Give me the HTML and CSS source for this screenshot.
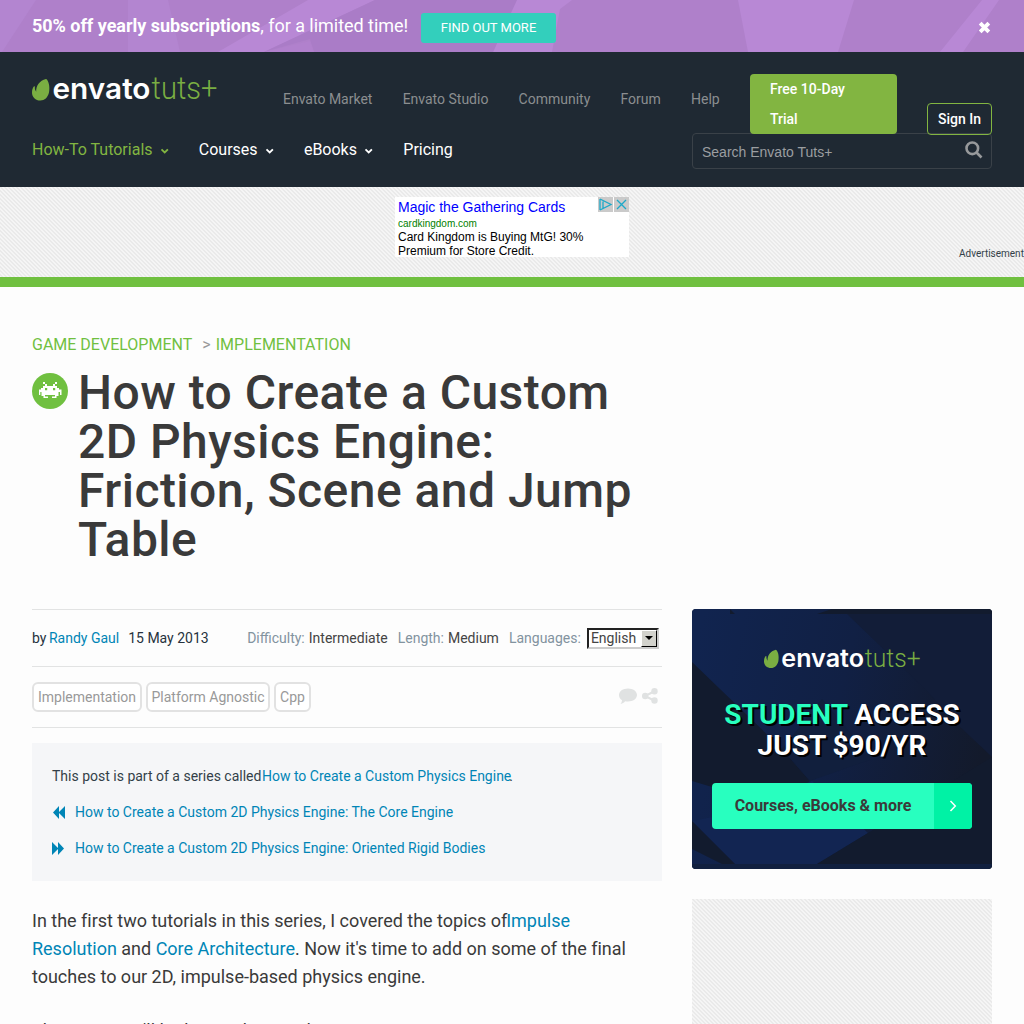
FILE: index.html
```html
<!DOCTYPE html>
<html lang="en">
<head>
<meta charset="utf-8">
<title>How to Create a Custom 2D Physics Engine: Friction, Scene and Jump Table</title>
<link rel="stylesheet" href="styles.css">
</head>
<body>
<div class="promo">
  <svg class="facets" viewBox="0 0 1024 52" preserveAspectRatio="none">
    <path fill="#b385d0" d="M0 0H36L2 52H0ZM128 0H168L180 52H128Z"/>
    <path fill="#b888d5" d="M308 0H375L264 52H218ZM516 0H572L560 9 552 52H493ZM738 0H854L838 52H748ZM982 0H999L963 52H940Z"/>
    <path fill="#aa7cc7" d="M375 0H517L493 52H314L310 39 264 52Z"/>
    <path fill="#b181cd" d="M310 41 264 52H314Z"/>
  </svg>
  <p class="promo-text"><b>50% off yearly subscriptions</b>, for a limited time!</p>
  <a class="promo-btn">FIND OUT MORE</a>
  <svg class="close" viewBox="0 0 12 12"><path d="M2 2 10 10M10 2 2 10" stroke="#fff" stroke-width="3.600"/></svg>
</div>

<header class="header">
  <div class="top">
    <svg class="logo" viewBox="0 0 186 26">
      <path class="leaf" d="M14 1C16.500 2 18.200 8.500 17 14.500 15.800 19.500 12.600 22.500 8.400 22.500 3.500 22.500 0 19 0 14.700 0 12 .6 10 1.800 8.500 2.400 8 3 8.300 2.900 9 2.700 11 3.100 12 4.200 13.800 3.900 8 7.500 2.500 14 1Z"/>
      <text class="word" x="20.500" y="21.300" textLength="98" lengthAdjust="spacingAndGlyphs">envato</text>
      <text class="thin" x="119.500" y="21.300" textLength="66" lengthAdjust="spacingAndGlyphs">tuts+</text>
    </svg>
    <nav class="links"><a>Envato Market</a><a>Envato Studio</a><a>Community</a><a>Forum</a><a>Help</a></nav>
    <a class="trial">Free 10-Day<br>Trial</a>
    <a class="signin">Sign In</a>
  </div>
  <div class="bottom">
    <nav class="menu">
      <a class="active">How-To Tutorials<svg viewBox="0 0 10 7"><path d="M1.500 1.300 4.700 4.500 7.900 1.300"/></svg></a>
      <a>Courses<svg viewBox="0 0 10 7"><path d="M1.500 1.300 4.700 4.500 7.900 1.300"/></svg></a>
      <a>eBooks<svg viewBox="0 0 10 7"><path d="M1.500 1.300 4.700 4.500 7.900 1.300"/></svg></a>
      <a>Pricing</a>
    </nav>
    <div class="search"><span>Search Envato Tuts+</span>
      <svg viewBox="0 0 18 18"><circle cx="7.300" cy="7.300" r="5.800"/><path d="M11.500 11.500 16.500 16.500"/></svg>
    </div>
  </div>
</header>

<div class="banner">
  <div class="ad">
    <p class="ad-title">Magic the Gathering Cards</p>
    <p class="ad-url">cardkingdom.com</p>
    <p class="ad-body">Card Kingdom is Buying MtG! 30%<br>Premium for Store Credit.</p>
    <div class="ad-marks">
      <svg viewBox="0 0 15 15"><path d="M2 2V13M2 2 13 7.500 5 11.500V4.500M2 13 5 11.500"/></svg>
      <svg viewBox="0 0 15 15"><path d="M3 3 12 12M12 3 3 12"/></svg>
    </div>
  </div>
  <span class="ad-label">Advertisement</span>
</div>

<main class="page">
  <div class="crumbs"><a>GAME DEVELOPMENT</a><i>&gt;</i><a>IMPLEMENTATION</a></div>
  <div class="heading">
    <svg class="badge" viewBox="0 0 36 36"><circle cx="18" cy="18" r="18" fill="#70c040"/>
      <path fill="#fff" d="M11 9h2v2h2v2h6v-2h2V9h2v2h-2v2h2v2h2v1.500h2.500V22H28v-3H26.500v4H24.500v2h-4.500v-1.500h3V22H13v1.500h3V25h-4.500v-2H9.500v-4H8.300v3H7v-5.500h2V15h2v-2h2v-2h-2Z"/>
      <path fill="#70c040" d="M13 15h2.200v2.200H13zM21 15h2.200v2.200H21z"/></svg>
    <h1>How to Create a Custom<br>2D Physics Engine:<br>Friction, Scene and Jump<br>Table</h1>
  </div>
  <div class="columns">
    <article>
      <div class="meta">
        <span class="by">by</span><a class="author">Randy Gaul</a><span class="date">15 May 2013</span>
        <span class="pair"><em>Difficulty:</em>Intermediate</span>
        <span class="pair"><em>Length:</em>Medium</span>
        <span class="pair"><em>Languages:</em></span>
        <div class="select"><span>English</span><b><svg viewBox="0 0 8 4"><path d="M0 0H8L4 4Z"/></svg></b></div>
      </div>
      <div class="tags"><a class="t1">Implementation</a><a class="t2">Platform Agnostic</a><a class="t3">Cpp</a>
        <svg class="bubble" viewBox="0 0 18 16"><path d="M9 .5C14 .5 18 3.300 18 7S14 13.500 9 13.500C8 13.500 7 13.400 6.200 13.200 5 14.500 3.500 15.500 1.500 16 2.500 14.800 3 13.500 3 12.200 1 11 0 9.300 0 7 0 3.300 4 .5 9 .5Z"/></svg>
        <svg class="share" viewBox="0 0 16 16"><path d="M13 3 3 8 13 13" fill="none" stroke="#e0e2e2" stroke-width="2"/><circle cx="12.500" cy="3.200" r="3.200"/><circle cx="3.200" cy="8" r="3.200"/><circle cx="12.500" cy="12.500" r="3.200"/></svg>
      </div>
      <div class="series">
        <p>This post is part of a series called<a>How to Create a Custom Physics Engine</a><span class="dot">.</span></p>
        <p><svg viewBox="0 0 13 13"><path d="M1 6.500 7 0V6L13 0V13L7 7V13Z"/></svg><a>How to Create a Custom 2D Physics Engine: The Core Engine</a></p>
        <p><svg viewBox="0 0 13 13"><path d="M12 6.500 6 0V6L0 0V13L6 7V13Z"/></svg><a>How to Create a Custom 2D Physics Engine: Oriented Rigid Bodies</a></p>
      </div>
      <div class="body">
        <p>In the first two tutorials in this series, I covered the topics of<a class="tight">Impulse</a><br><a>Resolution</a> and <a>Core Architecture</a>. Now it's time to add on some of the final<br>touches to our 2D, impulse-based physics engine.</p>
        <p>The topics we'll look at in this article are:</p>
      </div>
    </article>
    <aside>
      <div class="student">
        <svg class="facets" viewBox="0 0 300 260">
          <defs><linearGradient id="night" x1="0" y1=".2" x2="1" y2=".4"><stop offset="0" stop-color="#11244f"/><stop offset=".5" stop-color="#112044"/><stop offset="1" stop-color="#131a2b"/></linearGradient></defs>
          <path fill="url(#night)" d="M0 0H300V260H0Z"/>
          <path fill="#121b2e" d="M0 53 90 140 118 172 80 196 0 172ZM38 5H43L38 0ZM125 5 140 0H300V5Z"/>
          <path fill="#121d38" d="M155 5H300V148L265 115 235 82Z"/>
          <path fill="#111f3d" d="M90 140 118 172 180 150 130 90Z"/>
          <path fill="#122552" d="M0 212 43 255H125L176 224 120 172 80 196Z"/>
          <path fill="#121b2e" d="M0 212 43 255H30L0 240ZM125 255 176 224 300 148V255Z"/>
          <path fill="#11203f" d="M0 255H300V260H0Z"/>
        </svg>
        <svg class="logo" viewBox="0 0 186 26">
          <path class="leaf" d="M14 1C16.500 2 18.200 8.500 17 14.500 15.800 19.500 12.600 22.500 8.400 22.500 3.500 22.500 0 19 0 14.700 0 12 .6 10 1.800 8.500 2.400 8 3 8.300 2.900 9 2.700 11 3.100 12 4.200 13.800 3.900 8 7.500 2.500 14 1Z"/>
          <text class="word" x="20.500" y="21.300" textLength="98" lengthAdjust="spacingAndGlyphs">envato</text>
          <text class="thin" x="119.500" y="21.300" textLength="66" lengthAdjust="spacingAndGlyphs">tuts+</text>
        </svg>
        <p class="pitch"><b>STUDENT</b> ACCESS<br>JUST $90/YR</p>
        <a class="cta"><span>Courses, eBooks &amp; more</span><i><svg viewBox="0 0 8 12"><path d="M1.500 1 6.300 6 1.500 11"/></svg></i></a>
      </div>
      <div class="slot"></div>
    </aside>
  </div>
</main>
</body>
</html>
```

FILE: styles.css
```css
* { box-sizing: border-box; }
html, body { height: 1024px; overflow: hidden; }
body { margin: 0; background: #fdfdfd; font: 14px/20px Roboto, sans-serif; color: #3a3a3a; }
p, h1 { margin: 0; }
i, em { font-style: normal; }
a, span { white-space: nowrap; }
.facets { position: absolute; left: 0; top: 0; width: 100%; height: 100%; z-index: -1; }
.leaf { fill: #7aae42; }
.word { font: 600 29px Inter, sans-serif; fill: #fff; }
.thin { font: 300 31px Roboto, sans-serif; fill: #7aae42; }

.promo { position: relative; z-index: 0; height: 52px; background: #af80ca; color: #fff; display: flex; align-items: flex-start; padding: 13px 33px 0 32px; }
.promo-text { font-size: 18px; line-height: 26px; letter-spacing: -.03px; width: 389px; white-space: nowrap; }
.promo-btn { width: 135px; height: 30px; line-height: 30px; border-radius: 3px; background: #33cfbc; font-size: 13px; text-align: center; }
.close { width: 13px; height: 13px; margin: 8px 0 0 auto; }

.header { height: 135px; background: #1f2933; padding: 22px 32px 0; }
.top { height: 60px; display: flex; align-items: flex-start; }
.top .logo { width: 186px; height: 26px; margin-top: 4px; overflow: visible; }
.links { display: flex; gap: 30.200px; margin-left: 65px; padding-top: 15px; color: #8b8e90; width: 467px; }
.trial { position: relative; z-index: 1; width: 147px; height: 60px; padding-left: 20px; border-radius: 4px; background: #82b541; color: #fff; font-weight: 500; line-height: 30px; }
.signin { position: relative; width: 65px; height: 32px; margin: 29px 0 0 30px; border: 1px solid #82b541; border-radius: 4px; color: #fff; font-weight: 500; line-height: 30px; text-align: center; }
.bottom { display: flex; justify-content: space-between; margin-top: -1px; }
.menu { display: flex; gap: 29.300px; padding-top: 7px; font-size: 16px; color: #fff; }
.menu .active { color: #82b541; }
.menu svg { width: 10px; height: 7px; margin-left: 7px; fill: none; stroke: currentColor; stroke-width: 1.800; }
.search { width: 300px; height: 36px; border: 1px solid #3a4148; border-radius: 4px; display: flex; justify-content: space-between; padding: 8px 8px 0 9px; color: #9b9ea1; }
.search span { font: 14px/20px "Liberation Sans", sans-serif; }
.search svg { width: 18px; height: 18px; margin-top: -1px; fill: none; stroke: #97999b; stroke-width: 2.600; }

.banner { height: 100px; border-bottom: 10px solid #70c040; display: flex; justify-content: space-between; padding: 10px 0 0 395px; }
.banner, .slot { background: repeating-linear-gradient(45deg, #f5f5f5 0 1.414px, #eaeaea 1.414px 2.828px); }
.ad { position: relative; width: 234px; height: 60px; background: #fff; padding: 2px 3px; font: 12px/14px "Liberation Sans", sans-serif; color: #000; white-space: nowrap; }
.ad-title { font-size: 14px; line-height: 16px; color: #00f; }
.ad-url { font-size: 10px; line-height: 13px; margin-top: 2px; color: #008000; }
.ad-marks { position: absolute; right: 0; top: 0; display: flex; gap: 1px; }
.ad-marks svg { width: 15px; height: 15px; background: #cacaca; fill: none; stroke: #1ba9c9; stroke-width: 1.300; }
.ad-label { font-size: 10px; margin-top: 47px; color: #333f48; width: 65px; }

.page { padding: 48px 32px 0; }
.crumbs { display: flex; font-size: 16px; color: #70c040; line-height: 20px; }
.crumbs i { color: #999; font-size: 16px; width: 23.500px; padding-left: 10px; }
.heading { display: flex; margin-top: 13px; gap: 10px; height: 241px; }
.badge { width: 36px; height: 36px; margin-top: 5px; }
h1 { font-size: 48px; line-height: 49px; font-weight: 500; letter-spacing: .46px; white-space: nowrap; }
.columns { display: flex; gap: 30px; }
article { width: 630px; }
.meta { height: 58px; border: solid #e2e3e3; border-width: 1px 0; display: flex; align-items: center; color: #444; }
.by, .date { color: #26323d; }
.author { margin: 0 9px 0 2.500px; }
a.author, .series a, .body a { color: #0085b6; }
.date { width: 119px; }
.pair { margin-right: 10px; }
.pair em { color: #82939f; margin-right: 4px; }
.select { width: 72px; height: 21px; margin-left: -7.500px; border: 2px solid #000; border-color: #222 #ccc #ccc #222; background: #fff; display: flex; justify-content: space-between; line-height: 16px; padding-left: 1.500px; }
.select b { width: 16px; background: #d2d2cc; border: 1px solid; border-color: #fff #000 #000 #fff; display: grid; place-items: center; }
.select svg { width: 8px; height: 4px; }
.tags { height: 61px; border-bottom: 1px solid #e2e3e3; display: flex; gap: 4px; align-items: center; padding-right: 4px; }
.tags a { height: 30px; border: 2px solid #e2e2e2; border-radius: 6px; line-height: 26px; text-align: center; color: #999; background: #fff; }
.t1 { width: 110px; }
.t2 { width: 124px; }
.t3 { width: 37px; }
.tags svg { fill: #e0e2e2; height: 16px; margin-bottom: 2px; }
.tags .bubble { width: 18px; margin-left: auto; margin-right: 1px; }
.share { width: 16px; }
.series { margin-top: 15px; height: 138px; background: #f5f6f8; padding: 15px 20px; line-height: 36px; color: #333f48; }
.series p { height: 36px; display: flex; align-items: center; }
.series svg { width: 13px; height: 13px; margin-right: 10px; fill: #0085b6; }
.series p > a:first-child { margin-left: .5px; }
.series .dot { margin-left: -2px; }
.body { padding-top: 26px; font-size: 18px; line-height: 28px; letter-spacing: -.01px; white-space: nowrap; }
.body p { margin-bottom: 26px; }
.body .tight { margin-left: -1px; }

aside { width: 300px; }
.student { position: relative; z-index: 0; height: 260px; border-radius: 4px; overflow: hidden; background: #111b30; display: flex; flex-direction: column; align-items: center; padding-top: 40px; }
.student .logo { width: 157px; height: 22px; flex: none; overflow: visible; }
.pitch { margin-top: 28px; font-size: 28px; line-height: 31px; font-weight: 700; color: #fff; text-align: center; text-shadow: 2px 2px 0 #000; white-space: nowrap; }
.pitch b { color: #28ffbf; font-weight: 700; }
.cta { width: 260px; height: 46px; margin-top: 22px; border-radius: 4px; overflow: hidden; background: #28ffbf; display: flex; font-size: 16px; line-height: 46px; font-weight: 700; color: #3a3a3a; }
.cta span { flex: 1; text-align: center; }
.cta i { width: 38px; background: #00f2a5; display: grid; place-items: center; }
.cta svg { width: 8px; height: 12px; fill: none; stroke: #fff; stroke-width: 1.500; }
.slot { height: 250px; margin-top: 30px; }
```
